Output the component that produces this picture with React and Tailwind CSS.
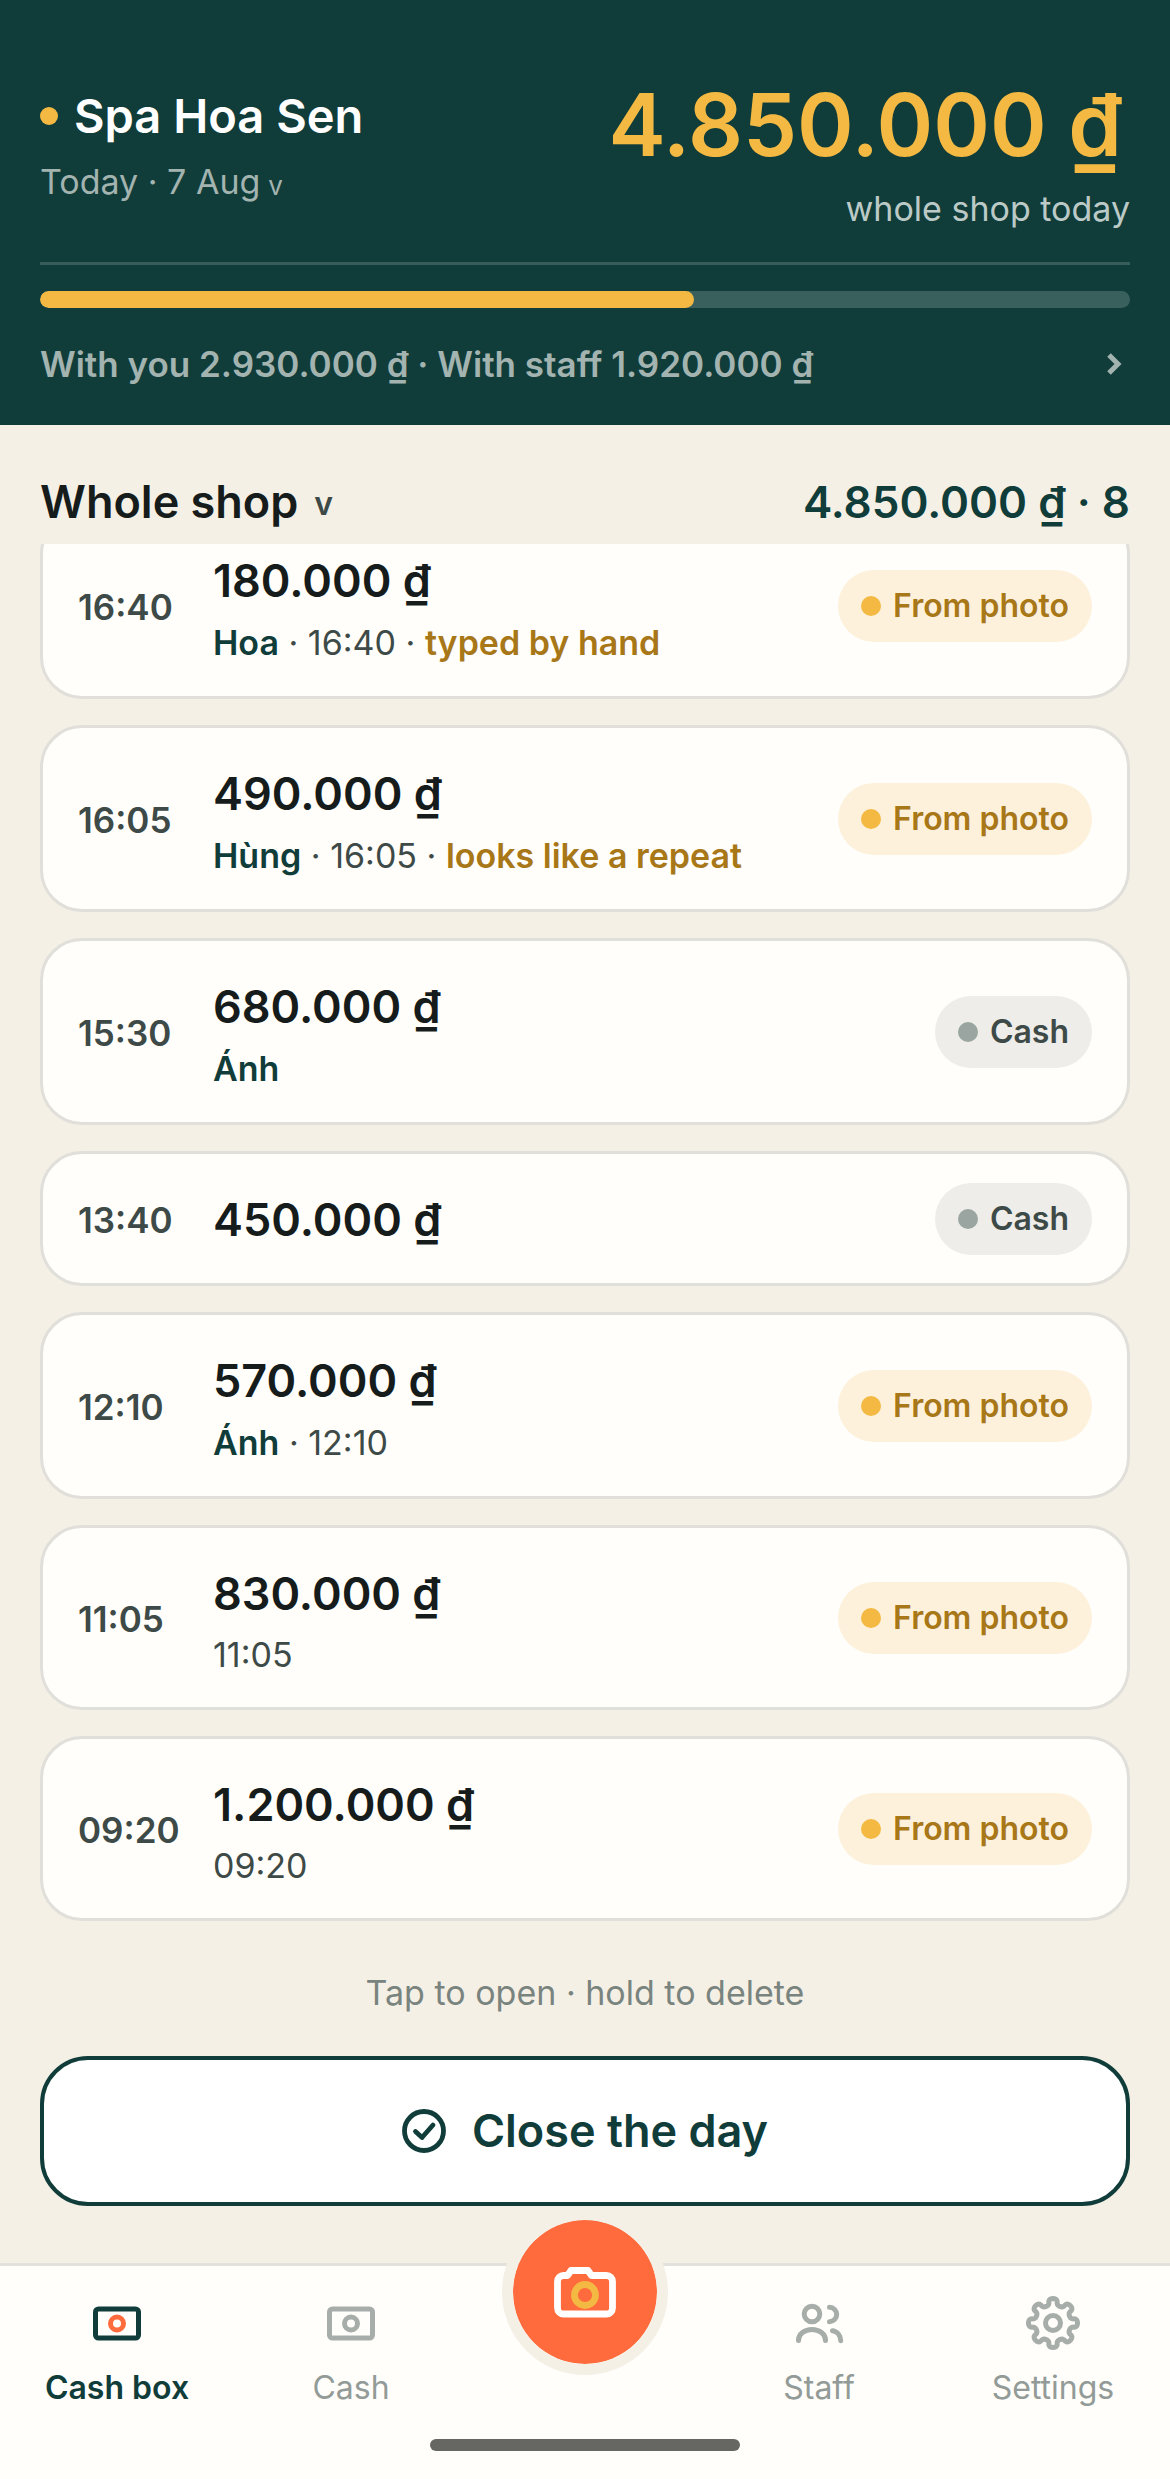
import React from 'react';

const records = [
  { id: 1, time: '16:40', amount: '180.000 ₫', name: 'Hoa', stamp: '16:40', note: 'typed by hand', source: 'photo' },
  { id: 2, time: '16:05', amount: '490.000 ₫', name: 'Hùng', stamp: '16:05', note: 'looks like a repeat', source: 'photo' },
  { id: 3, time: '15:30', amount: '680.000 ₫', name: 'Ánh', source: 'cash' },
  { id: 4, time: '13:40', amount: '450.000 ₫', source: 'cash' },
  { id: 5, time: '12:10', amount: '570.000 ₫', name: 'Ánh', stamp: '12:10', source: 'photo' },
  { id: 6, time: '11:05', amount: '830.000 ₫', stamp: '11:05', source: 'photo' },
  { id: 7, time: '09:20', amount: '1.200.000 ₫', stamp: '09:20', source: 'photo' },
];

const SourceBadge = ({ source }) => {
  if (source === 'photo') {
    return (
      <span className="flex h-[72px] shrink-0 items-center gap-3 rounded-full bg-[#fdf1dc] px-[23px] text-[32px] font-semibold text-[#a87718]">
        <span className="size-5 rounded-full bg-[#f4b942]"></span>
        From photo
      </span>
    );
  }
  return (
    <span className="flex h-[72px] shrink-0 items-center gap-3 rounded-full bg-[#eeede9] px-[23px] text-[32px] font-semibold text-[#3d4a47]">
      <span className="size-5 rounded-full bg-[#9aa5a1]"></span>
      Cash
    </span>
  );
};

const RecordCard = ({ record }) => {
  const { time, amount, name, stamp, note, source } = record;
  const hasDetails = name || stamp;

  return (
    <li>
      <button
        type="button"
        className="flex w-full items-center rounded-[42px] border-3 border-[#e0dfda] bg-[#fffefa] px-[35px] py-[27px] text-left"
      >
        <span className="w-[135px] shrink-0 pt-[3px] text-[35px] font-semibold text-[#3d4a47]">{time}</span>
        <span className="flex min-w-0 flex-1 flex-col pt-[3px]">
          <span className="text-[45px] leading-[72px] font-semibold text-[#161c1b]">{amount}</span>
          {hasDetails && (
            <span className={`text-[34px] text-[#3d4a47] ${name ? 'leading-[52px]' : 'leading-[50px]'}`}>
              {name && <span className="font-semibold text-[#103d3a]">{name}</span>}
              {name && stamp && ' · '}
              {stamp}
              {note && ' · '}
              {note && <span className="font-semibold text-[#a87718]">{note}</span>}
            </span>
          )}
        </span>
        <SourceBadge source={source} />
      </button>
    </li>
  );
};

const CashIcon = ({ accent = 'currentColor' }) => (
  <svg className="size-[66px]" viewBox="0 0 66 66" fill="none" strokeWidth="5" aria-hidden="true">
    <rect x="11.5" y="19" width="43" height="29" rx="3" stroke="currentColor" />
    <circle cx="33" cy="33.5" r="6.5" stroke={accent} />
  </svg>
);

const StaffIcon = () => (
  <svg className="size-[66px]" viewBox="0 0 66 66" fill="none" stroke="currentColor" strokeWidth="5" strokeLinecap="round" aria-hidden="true">
    <circle cx="26" cy="24" r="7.8" />
    <path d="M12.5 50.5c0-6.5 6-11 13.5-11s13.5 4.5 13.5 11" />
    <path d="M43.5 17.3a7.2 7.2 0 0 1 0 14.4" />
    <path d="M46.5 40.7c5 .8 8 5 8.2 10" />
  </svg>
);

// Eight rounded teeth, slightly wider at the tip than at the root
const gearOutline = () => {
  const points = [];
  for (let i = 0; i < 192; i++) {
    const t = (i / 192) * Math.PI * 2;
    const r = 21.2 + 3.3 * Math.cos(8 * t);
    const a = t + 0.05 * Math.sin(16 * t) - Math.PI / 2;
    points.push(`${(33 + r * Math.cos(a)).toFixed(2)} ${(33 + r * Math.sin(a)).toFixed(2)}`);
  }
  return `M${points.join('L')}Z`;
};

const SettingsIcon = () => (
  <svg className="size-[66px]" viewBox="0 0 66 66" fill="none" stroke="currentColor" strokeWidth="5" strokeLinejoin="round" aria-hidden="true">
    <circle cx="33" cy="33" r="7.5" />
    <path d={gearOutline()} />
  </svg>
);

const App = () => {
  return (
    <div className="flex min-h-screen flex-col bg-[#f5f0e6] font-['Inter',sans-serif]">
      {/* Header */}
      <header className="bg-[#103d3a] px-10 pt-[82px] pb-8">
        <div className="flex items-start justify-between border-b-3 border-[#365d5a] pb-3">
          <div>
            <h1 className="flex items-center gap-4 text-[47px] leading-[68px] font-semibold text-white">
              <span className="size-[18px] rounded-full bg-[#f4b942]"></span>
              Spa Hoa Sen
            </h1>
            <button type="button" className="flex items-center gap-2 text-[34px] leading-[64px] text-[#a3b3b0]">
              Today · 7 Aug <span className="pt-2 text-[26px] leading-[54px]">v</span>
            </button>
          </div>
          <div className="text-right">
            <p className="pr-2 text-[86px] leading-[86px] font-semibold text-[#f4b942]">4.850.000 ₫</p>
            <p className="text-[34px] leading-[82px] text-[#bccac7]">whole shop today</p>
          </div>
        </div>
        <div className="mt-[26px] h-[17px] overflow-hidden rounded-full bg-[#3a605d]">
          <div className="h-full w-3/5 rounded-full bg-[#f4b942]"></div>
        </div>
        <button type="button" className="mt-[27px] flex w-full items-center justify-between text-[35px] leading-[58px] font-semibold text-[#a3b3b0]">
          With you 2.930.000 ₫ · With staff 1.920.000 ₫
          <svg className="size-6" viewBox="0 0 24 24" fill="none" stroke="currentColor" strokeWidth="5" aria-hidden="true">
            <path d="M3 3l9 9-9 9" />
          </svg>
        </button>
      </header>

      {/* List heading */}
      <div className="flex h-[119px] items-center justify-between px-10 pt-[34px]">
        <button type="button" className="flex items-center gap-4 text-[45px] font-semibold text-[#161c1b]">
          Whole shop <span className="pt-1 text-[32px] text-[#3d4a47]">v</span>
        </button>
        <p className="text-[44px] font-semibold text-[#103d3a]">4.850.000 ₫ · 8</p>
      </div>

      {/* Records, scrolled a little past the first card's top edge */}
      <main className="flex-1 px-10">
        <div className="overflow-hidden">
          <ul className="-mt-8 flex flex-col gap-[26px]">
            {records.map((record) => (
              <RecordCard key={record.id} record={record} />
            ))}
          </ul>
        </div>
        <p className="mt-[38px] text-center text-[34px] leading-[68px] text-[#7a847f]">Tap to open · hold to delete</p>
        <button
          type="button"
          className="mt-[29px] flex h-[150px] w-full items-center justify-center gap-[26px] rounded-[48px] border-4 border-[#103d3a] bg-white text-[45px] font-semibold text-[#103d3a]"
        >
          <svg className="size-11" viewBox="0 0 44 44" fill="none" stroke="currentColor" strokeWidth="4.8" strokeLinecap="round" strokeLinejoin="round" aria-hidden="true">
            <circle cx="22" cy="22" r="19.5" />
            <path d="M13.5 22.5l6.5 6L31 16" />
          </svg>
          Close the day
        </button>
      </main>

      {/* Tab bar */}
      <nav className="mt-[57px] border-t-3 border-[#e2e1dc] bg-[#fffefa] text-[32px] text-[#929b97]">
        <div className="grid h-[173px] grid-cols-5">
          <a href="#cash-box" className="flex flex-col items-center gap-2 pt-6 font-semibold text-[#103d3a]">
            <CashIcon accent="#ff6b3d" />
            Cash box
          </a>
          <a href="#cash" className="flex flex-col items-center gap-2 pt-6">
            <span className="text-[#a7ada9]"><CashIcon /></span>
            Cash
          </a>
          <div className="flex justify-center">
            <button
              type="button"
              aria-label="Take a photo"
              className="-mt-[57px] flex size-[166px] items-center justify-center rounded-full border-11 border-[#f5f0e6] bg-[#ff6b3d] bg-clip-padding"
            >
              <svg className="size-[72px]" viewBox="0 0 72 72" fill="none" strokeWidth="6.8" strokeLinejoin="round" aria-hidden="true">
                <path d="M14.5 19.5H18.5L22 14.5H39L42.5 19.5H57.5a6 6 0 0 1 6 6V52a6 6 0 0 1-6 6H14.5a6 6 0 0 1-6-6V25.5a6 6 0 0 1 6-6z" stroke="#fff" />
                <circle cx="36" cy="39" r="10.5" stroke="#f4b942" />
              </svg>
            </button>
          </div>
          <a href="#staff" className="flex flex-col items-center gap-2 pt-6">
            <span className="text-[#a7ada9]"><StaffIcon /></span>
            Staff
          </a>
          <a href="#settings" className="flex flex-col items-center gap-2 pt-6">
            <span className="text-[#a7ada9]"><SettingsIcon /></span>
            Settings
          </a>
        </div>
        <div className="mx-auto mb-7 h-3 w-[310px] rounded-full bg-[#666662]"></div>
      </nav>
    </div>
  );
};

export default App;
